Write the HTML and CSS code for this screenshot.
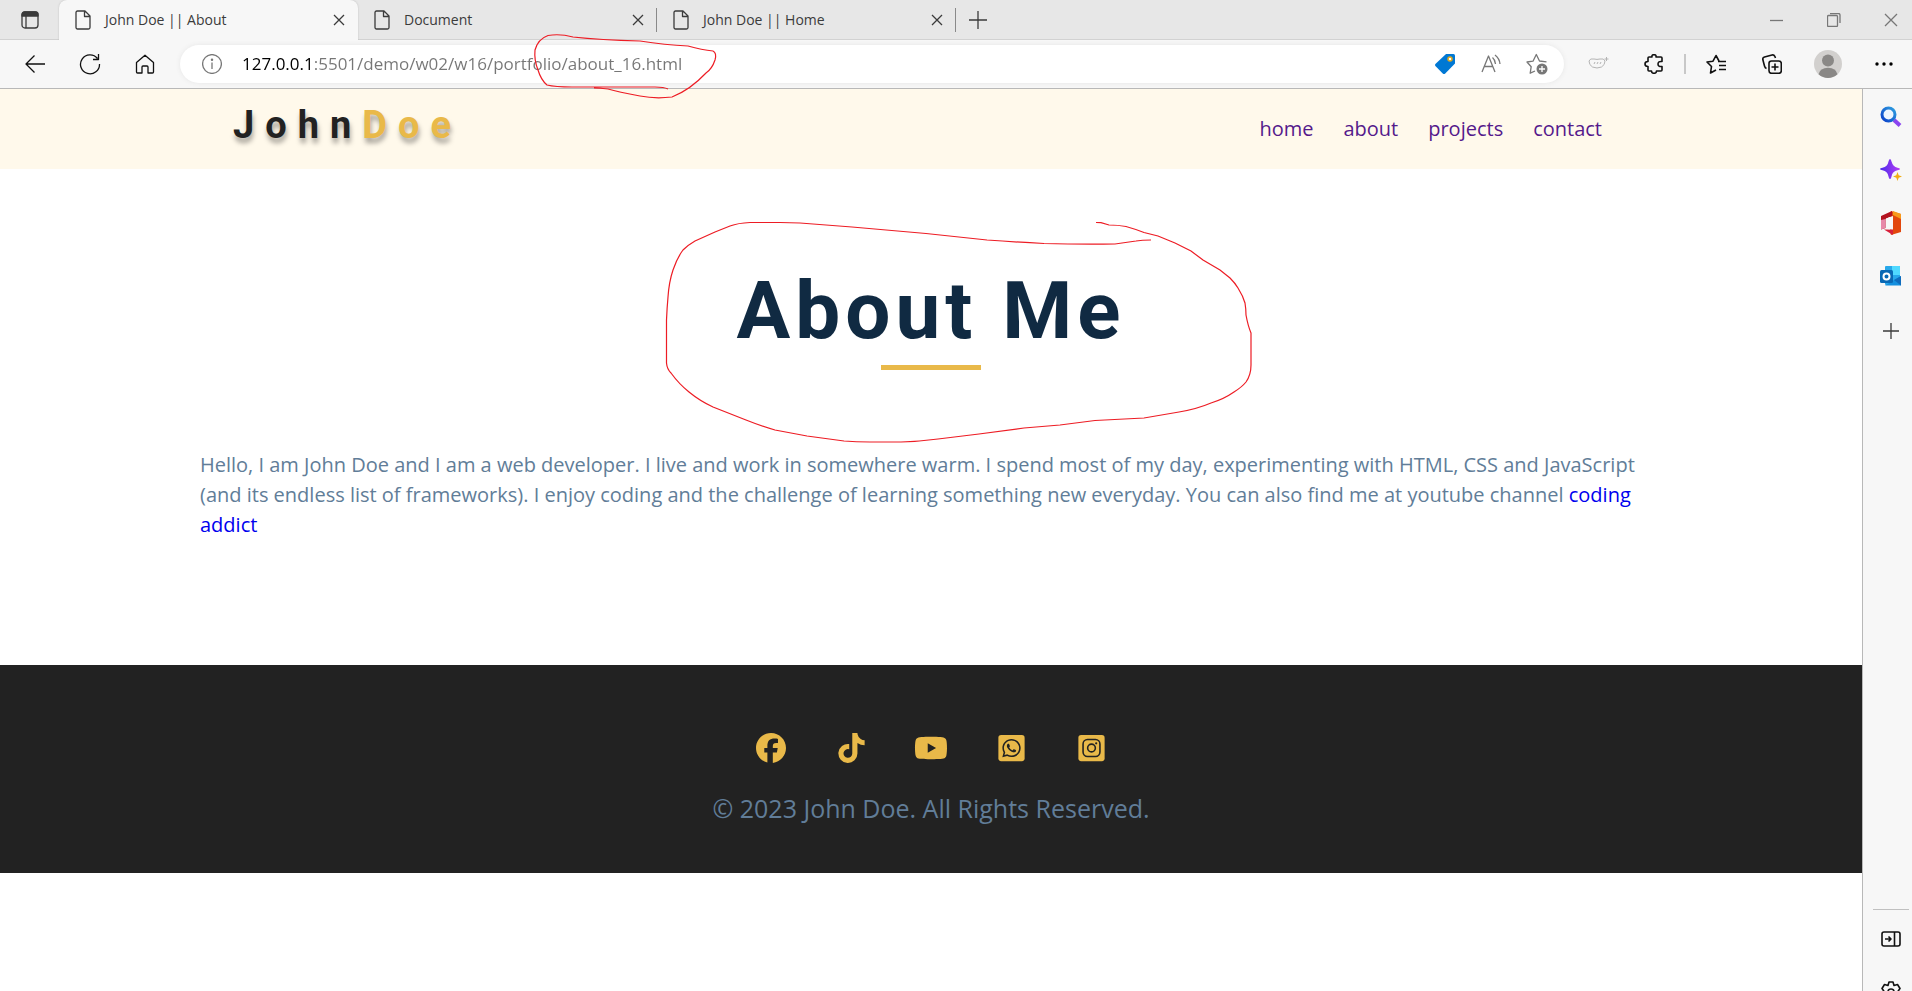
FILE: index.html
```html
<!DOCTYPE html>
<html lang="en">
<head>
<meta charset="utf-8">
<title>John Doe || About</title>
<link rel="stylesheet" href="styles.css">
</head>
<body>
<svg class="defs" aria-hidden="true">
  <symbol id="doc" viewBox="0 0 16 20"><path d="M3 1h7l5 5v11.500a1.500 1.500 0 0 1-1.500 1.500h-11a1.500 1.500 0 0 1-1.500-1.500v-15a1.500 1.500 0 0 1 1.500-1.500zM9.500 1v5.500h5.500"/></symbol>
  <symbol id="cross" viewBox="0 0 12 12"><path d="M1 1l10 10M11 1L1 11"/></symbol>
</svg>
<header class="browser">
  <div class="tabstrip">
    <button class="tab-actions" aria-label="Tab actions"><svg width="18" height="18" viewBox="0 0 18 18" class="line dark"><rect x="1" y="1" width="16" height="16" rx="3"/><path d="M5 5v12"/><path d="M1 5V3.500Q1 1 3.500 1h11Q17 1 17 3.500V5z" fill="#3b3b3b"/></svg></button>
    <div class="tab active"><svg class="line dark" width="16" height="20"><use href="#doc"/></svg><span class="tab-title">John Doe || About</span><button class="close" aria-label="Close tab"><svg class="line dark" width="12" height="12"><use href="#cross"/></svg></button></div>
    <div class="tab"><svg class="line dark" width="16" height="20"><use href="#doc"/></svg><span class="tab-title">Document</span><button class="close" aria-label="Close tab"><svg class="line dark" width="12" height="12"><use href="#cross"/></svg></button></div>
    <div class="tab"><svg class="line dark" width="16" height="20"><use href="#doc"/></svg><span class="tab-title">John Doe || Home</span><button class="close" aria-label="Close tab"><svg class="line dark" width="12" height="12"><use href="#cross"/></svg></button></div>
    <button class="new-tab" aria-label="New tab"><svg class="line dark" width="18" height="18" viewBox="0 0 18 18"><path d="M9 0v18M0 9h18"/></svg></button>
    <div class="window-buttons">
      <button aria-label="Minimize"><svg class="line grey" width="14" height="14" viewBox="0 0 14 14"><path d="M0 7.500h13"/></svg></button>
      <button aria-label="Restore"><svg class="line grey" width="14" height="14" viewBox="0 0 14 14"><rect x=".5" y="2.500" width="10" height="11" rx="1"/><path d="M3 .5h8.500a1.500 1.500 0 0 1 1.500 1.500v8"/></svg></button>
      <button aria-label="Close"><svg class="line grey" width="14" height="14" viewBox="0 0 14 14"><path d="M1 1l12 12M13 1L1 13"/></svg></button>
    </div>
  </div>
  <div class="toolbar">
    <div class="nav-buttons">
      <button aria-label="Back"><svg class="line black" width="22" height="20" viewBox="0 0 22 20"><path d="M21 10H2M10.500 1.500L2 10l8.500 8.500"/></svg></button>
      <button aria-label="Refresh"><svg class="line black" width="22" height="22" viewBox="0 0 22 22"><path d="M20.500 11A9.500 9.500 0 1 1 18.500 5.500M19.500 1v5.500h-5.500"/></svg></button>
      <button aria-label="Home"><svg class="line black" width="20" height="20" viewBox="0 0 20 20"><path d="M1.500 8.500L10 1.200l8.500 7.300V18q0 1-1 1H13v-6q0-1-1-1H8q-1 0-1 1v6H2.500q-1 0-1-1z"/></svg></button>
    </div>
    <div class="address">
      <button class="info" aria-label="Site information"><svg class="line grey" width="20" height="20" viewBox="0 0 20 20"><circle cx="10" cy="10" r="9.400"/><path d="M10 8.500V15"/><circle cx="10" cy="5.800" r=".6"/></svg></button>
      <input class="url" type="text" aria-label="Address" value="127.0.0.1:5501/demo/w02/w16/portfolio/about_16.html">
      <button class="address-action" aria-label="Shopping"><svg width="20" height="20" viewBox="0 0 20 20"><path d="M11 0h7.500Q20 0 20 1.500V9.500L10 19.700q-1 .6-2 0L.4 12q-.7-1 0-2z" fill="#0078d4"/><circle cx="15" cy="5" r="2" fill="#fff" stroke="#e2a91c" stroke-width="1.500"/></svg></button>
      <button class="address-action" aria-label="Read aloud"><svg class="line grey" width="20" height="20" viewBox="0 0 20 20"><path d="M1 18L7.500 2 14 18M3.200 12.500h8.600M11.500 3.500q2.500 2 3 6.500M14 1q4.500 3.500 5 9"/></svg></button>
      <button class="address-action" aria-label="Add favorite"><svg class="line grey" width="22" height="22" viewBox="0 0 22 22"><path d="M9 18l-4.800 2.200 1-6.500L1 9l6-.8L10.300 1.500 13.500 8l7 .8"/><circle cx="16" cy="16" r="5.500" fill="#777" stroke="none"/><path d="M16 13v6M13 16h6" stroke="#fff"/></svg></button>
    </div>
    <div class="extensions">
      <button aria-label="Extension"><svg class="line pale" width="20" height="14" viewBox="0 0 20 14"><path d="M1 4q1-3 5-2 3 .8 6 0 4-1 5 2 0 4-3.500 6-4.500 2-9 0Q1 8 1 4zM6 7l1-2M9 7l1-2M12 7l1-2M18.500 0v4M16.500 2h4"/></svg></button>
      <button aria-label="Extensions"><svg class="line black thick" width="20" height="20" viewBox="0 0 20 20"><path d="M5 3h3q-.5-2.300 2-2.300T12 3h5q1 0 1 1v3.500q-4-.5-4 2.500t4 2.500V16q0 1-1 1h-4.500q0 2.300-2.500 2.300T7.500 17H5q-1 0-1-1v-3.500Q1 12.500 1 10t3-2.500V4q0-1 1-1z"/></svg></button>
      <span class="divider"></span>
      <button aria-label="Favorites"><svg class="line black thick" width="20" height="20" viewBox="0 0 20 20"><path d="M10 16l-5.500 3 1-6.500L1 8l6-.8L10 1.500l3 5.500M12 7.500h8M13 11.500h7M13 15.500h7"/></svg></button>
      <button aria-label="Collections"><svg class="line black thick" width="20" height="20" viewBox="0 0 20 20"><rect x="7" y="7" width="12.300" height="12.300" rx="2.500"/><path d="M13 9.500v7M9.500 13h7M4.500 14.500Q3 14 2.500 12L.8 5.500Q.5 3.500 2.500 3L10 1q2-.4 2.800 1.300L13.500 4"/></svg></button>
      <button aria-label="Profile"><svg width="28" height="28" viewBox="0 0 28 28"><circle cx="14" cy="14" r="14" fill="#d2d0ce"/><circle cx="14" cy="10.500" r="6" fill="#8a8886"/><path d="M4.500 24.200q1.500-6.500 9.500-6.500t9.500 6.500Q19 28 14 28t-9.500-3.800z" fill="#8a8886"/></svg></button>
      <button aria-label="Settings and more"><svg width="18" height="4" viewBox="0 0 18 4"><circle cx="2" cy="2" r="1.700"/><circle cx="9" cy="2" r="1.700"/><circle cx="16" cy="2" r="1.700"/></svg></button>
    </div>
    <svg class="mark url-mark" width="182" height="66" viewBox="535 33 182 66" aria-hidden="true"><path d="M668 89Q664 87 655 87H572Q555 87 547 85Q541 80 538 70Q534 60 535 50Q538 39 548 35.500Q560 33.500 573 37Q600 40 640 41Q665 45 688 46Q702 50 713 51Q717 53 715 60Q712 69 706 73Q690 90 672 97Q655 99 640 96Q618 92 608 89Q600 88 594 88"/></svg>
  </div>
</header>
<div class="workspace">
  <div class="page">
    <header class="site-header">
      <div class="site-header-inner">
        <a class="logo" href="#">John<span>Doe</span></a>
        <nav class="site-nav"><a href="#">home</a><a href="#">about</a><a href="#">projects</a><a href="#">contact</a></nav>
      </div>
    </header>
    <main class="about">
      <div class="title">
        <h1>About Me</h1>
        <div class="underline"></div>
        <svg class="mark title-mark" width="588" height="222" viewBox="665 221 588 222" aria-hidden="true"><path d="M1096 222.500L1101 222.700 1109 225Q1118 225 1126 226.500 1135 229 1144 232.500L1158 236 1175 243 1191 251 1203 260 1220 270 1230 278Q1235 283 1238 288 1243 296 1245 303 1246 309 1246 315 1248 326 1251 333V365Q1251 375 1246 382 1242 387 1234 392 1224 399 1211 403 1197 409 1179 412L1144 418 1095 420.500 1060 425 1024 428 979 434 938 439Q919 441.500 901 442H870Q856 442 844 441L807 436 775 430Q761 426 746 420L713 407Q700 401 689 392 679 384 671 373 667 369 666.500 363V320Q667 308 668 297 669 282 673 270 677 258 683 250 688 245 695 241L715 232 730 226Q738 223 750 222.500H780Q790 222.500 800 223L852 227 926 233.500 987 240Q1015 242 1044 243.500 1080 244.500 1115 244L1136 241Q1142 240 1151 240"/></svg>
      </div>
      <p class="about-text">Hello, I am John Doe and I am a web developer. I live and work in somewhere warm. I spend most of my day, experimenting with HTML, CSS and JavaScript (and its endless list of frameworks). I enjoy coding and the challenge of learning something new everyday. You can also find me at youtube channel <a href="#">coding addict</a></p>
    </main>
    <footer class="site-footer">
      <ul class="social">
        <li><a href="#" aria-label="Facebook"><svg width="30" height="30" viewBox="0 0 512 512"><path d="M512 256C512 114.600 397.400 0 256 0S0 114.600 0 256C0 376 82.700 476.800 194.200 504.500V334.200H141.400V256h52.800V222.300c0-87.100 39.400-127.500 125-127.500c16.200 0 44.200 3.200 55.700 6.400V172c-6-.6-16.500-1-29.600-1c-42 0-58.200 15.900-58.200 57.200V256h83.600l-14.400 78.200H287V510.100C413.800 494.800 512 386.900 512 256z"/></svg></a></li>
        <li><a href="#" aria-label="TikTok"><svg width="27" height="30" viewBox="0 0 448 512"><path d="M448 209.910a210.060 210.060 0 0 1-122.770-39.250V349.380A162.550 162.550 0 1 1 185 188.310V278.200a74.620 74.620 0 1 0 52.230 71.180V0l88 0a121.180 121.180 0 0 0 1.860 22.170A122.180 122.180 0 0 0 381 102.390a121.430 121.430 0 0 0 67 20.140Z"/></svg></a></li>
        <li><a href="#" aria-label="YouTube"><svg width="34" height="30" viewBox="0 0 576 512"><path d="M549.655 124.083c-6.281-23.650-24.787-42.276-48.284-48.597C458.781 64 288 64 288 64S117.220 64 74.629 75.486c-23.497 6.322-42.003 24.947-48.284 48.597-11.412 42.867-11.412 132.305-11.412 132.305s0 89.438 11.412 132.305c6.281 23.650 24.787 41.500 48.284 47.821C117.220 448 288 448 288 448s170.780 0 213.371-11.486c23.497-6.321 42.003-24.171 48.284-47.821 11.412-42.867 11.412-132.305 11.412-132.305s0-89.438-11.412-132.305zm-317.510 213.508V175.185l142.739 81.205-142.739 81.201z"/></svg></a></li>
        <li><a href="#" aria-label="WhatsApp"><svg width="27" height="30" viewBox="0 0 448 512"><rect y="32" width="448" height="448" rx="48"/><path class="cut" transform="translate(67 78) scale(.7)" d="M380.900 97.100C339 55.100 283.200 32 223.900 32c-122.400 0-222 99.600-222 222 0 39.100 10.200 77.300 29.600 111L0 480l117.700-30.900c32.400 17.700 68.900 27 106.100 27h.1c122.300 0 224.100-99.600 224.100-222 0-59.300-25.200-115-67.100-157zm-157 341.600c-33.200 0-65.700-8.900-94-25.700l-6.700-4-69.800 18.300L72 359.200l-4.400-7c-18.500-29.400-28.200-63.300-28.200-98.200 0-101.700 82.800-184.500 184.600-184.500 49.300 0 95.600 19.200 130.400 54.100 34.800 34.900 56.200 81.200 56.100 130.500 0 101.800-84.900 184.600-186.600 184.600zm101.200-138.200c-5.500-2.800-32.800-16.200-37.900-18-5.100-1.900-8.800-2.800-12.500 2.800-3.700 5.600-14.300 18-17.600 21.800-3.200 3.700-6.500 4.200-12 1.400-32.600-16.300-54-29.100-75.500-66-5.700-9.800 5.700-9.100 16.300-30.300 1.800-3.700.9-6.900-.5-9.700-1.400-2.800-12.500-30.100-17.100-41.200-4.500-10.800-9.100-9.300-12.500-9.500-3.200-.2-6.900-.2-10.600-.2-3.700 0-9.700 1.400-14.800 6.900-5.100 5.600-19.400 19-19.400 46.300 0 27.300 19.900 53.700 22.600 57.400 2.800 3.700 39.100 59.700 94.800 83.800 35.200 15.200 49 16.500 66.600 13.900 10.700-1.600 32.800-13.400 37.400-26.400 4.600-13 4.600-24.100 3.200-26.400-1.300-2.500-5-3.900-10.500-6.600z"/></svg></a></li>
        <li><a href="#" aria-label="Instagram"><svg width="27" height="30" viewBox="0 0 448 512"><rect y="32" width="448" height="448" rx="48"/><rect class="cut-line" x="80" y="112" width="288" height="288" rx="76"/><circle class="cut-line" cx="224" cy="256" r="66"/><circle class="cut" cx="304" cy="177" r="19"/></svg></a></li>
      </ul>
      <p class="copyright">© 2023 John Doe. All Rights Reserved.</p>
    </footer>
  </div>
  <aside class="sidebar">
    <button aria-label="Search"><svg width="22" height="22" viewBox="0 0 22 22"><defs><linearGradient id="lens" x1="0" y1="1" x2="1" y2="0"><stop offset="0" stop-color="#0a3fc9"/><stop offset="1" stop-color="#2f9fe0"/></linearGradient></defs><path d="M14 14l6 5.500" stroke="#8b45f0" stroke-width="4"/><circle cx="8.500" cy="8.500" r="6.500" fill="#eef6ff" stroke="url(#lens)" stroke-width="3"/></svg></button>
    <button aria-label="Discover"><svg width="22" height="22" viewBox="0 0 22 22"><defs><linearGradient id="spark"><stop offset="0" stop-color="#4a2bea"/><stop offset="1" stop-color="#b53df5"/></linearGradient></defs><path d="M10 0q1 0 1.500 2.500Q13 8 17.500 8.700 20 9.300 20 10t-2.500 1.300Q12.500 12 11.500 17.500 11 20 10 20t-1.500-2.500Q7.500 12 2.500 11.300 0 10.700 0 10t2.500-1.300Q7.500 8 8.500 2.500 9 0 10 0z" fill="url(#spark)"/><path d="M17.500 13l1.200 3.300L22 17.500l-3.300 1.200-1.200 3.300-1.200-3.300-3.300-1.200 3.300-1.200z" fill="#f2ad14"/></svg></button>
    <button aria-label="Office"><svg width="22" height="24" viewBox="0 0 22 24"><path d="M11 0l10 3v18l-10 3-1-3V3z" fill="#e2470d"/><path d="M13 0l8 3v5l-8-4z" fill="#f79a1c"/><path d="M12 0v5L5.500 8v9L1 18.500V5z" fill="#b3131f"/><path d="M1 9l4.500-1v9L1 18.500z" fill="#e888a9"/><path d="M4 18.500h9V24z" fill="#d8203b"/><path d="M6 7.500L13 5v13.500L6 18z" fill="#f7f7f7"/></svg></button>
    <button aria-label="Outlook"><svg width="22" height="22" viewBox="0 0 22 22"><rect x="5" y="1" width="15" height="19" rx="1" fill="#28a8ea"/><path d="M12 1h7q1 0 1 1v8h-8z" fill="#50d9ff"/><path d="M5 20.500L21 11v9.500z" fill="#1490df"/><path d="M14 15l7-4v9.500z" fill="#0f6cbd"/><rect x="0" y="5" width="13" height="13" rx="1.500" fill="#0a69b5"/><circle cx="6.500" cy="11.500" r="3" fill="none" stroke="#fff" stroke-width="2"/></svg></button>
    <button class="customize" aria-label="Customize"><svg class="line dark" width="16" height="16" viewBox="0 0 16 16"><path d="M8 0v16M0 8h16"/></svg></button>
    <div class="sidebar-bottom">
      <button aria-label="Hide sidebar"><svg class="line black thick" width="20" height="16" viewBox="0 0 20 16"><rect x="1" y="1" width="18" height="14" rx="2"/><path d="M13.500 1v14M4 8h6M7.500 5.500L10 8l-2.500 2.500"/></svg></button>
      <button aria-label="Settings"><svg class="line black thick" width="20" height="22" viewBox="0 0 20 22"><path d="M8 1h4l1 3.500 3.500-1 2.500 4L16.500 11 19 14.500l-2.500 4-3.500-1-1 3.500H8l-1-3.500-3.500 1-2.500-4L3.500 11 1 7.500l2.500-4 3.500 1z"/><circle cx="10" cy="11" r="3"/></svg></button>
    </div>
  </aside>
</div>
</body>
</html>
```
FILE: styles.css
```css
* { box-sizing: border-box; }
body {
  margin: 0;
  height: 100vh;
  display: flex;
  flex-direction: column;
  overflow: hidden;
  background: #fff;
  font-family: "Open Sans", sans-serif;
}
button {
  display: flex;
  align-items: center;
  justify-content: center;
  padding: 0;
  border: 0;
  background: none;
}
svg { flex: none; }
.defs { position: absolute; width: 0; height: 0; }
.line { fill: none; stroke-width: 1.3; stroke-linejoin: round; }
.thick { stroke-width: 1.6; }
.dark { stroke: #3b3b3b; }
.black { stroke: #111; }
.grey { stroke: #777; }
.pale { stroke: #b4b4b4; stroke-width: 1; overflow: visible; }
.mark {
  position: absolute;
  overflow: visible;
  fill: none;
  stroke: #ed1c24;
  stroke-width: 1.2;
  pointer-events: none;
}

.browser { flex: none; background: #f7f7f7; border-bottom: 1px solid #b8b8b8; }
.tabstrip {
  display: flex;
  height: 40px;
  background: #e7e7e7;
  border-bottom: 1px solid #d2d2d2;
}
.tab-actions { width: 59px; }
.tab {
  width: 299px;
  height: 40px;
  display: flex;
  align-items: center;
  gap: 14px;
  padding: 0 12px 0 16px;
  position: relative;
  color: #3b3b3b;
  font-size: 14px;
}
.tab:not(.active)::after {
  content: "";
  position: absolute;
  right: 0;
  top: 8px;
  height: 24px;
  border-right: 1px solid #8a8a8a;
}
.tab.active {
  background: #f7f7f7;
  border-radius: 8px 8px 0 0;
  box-shadow: 0 0 2px #bbb;
  clip-path: inset(-2px -2px 0 -2px);
}
.tab-title { flex: 1; padding-bottom: 2px; }
.close { width: 14px; height: 24px; }
.new-tab { width: 44px; }
.window-buttons { display: flex; margin-left: auto; }
.window-buttons button { width: 57px; }
.window-buttons button:last-child { width: 50px; padding-left: 7px; }

.toolbar { position: relative; display: flex; align-items: center; height: 48px; }
.nav-buttons { display: flex; padding: 0 8px 0 7px; }
.nav-buttons button { width: 55px; height: 40px; }
.address {
  flex: 1;
  display: flex;
  align-items: center;
  height: 38px;
  padding-right: 4px;
  border-radius: 19px;
  background: #fff;
  box-shadow: 0 0 5px #e6e6e6;
}
.info { width: 62px; height: 36px; padding-left: 2px; }
.url {
  flex: 1;
  height: 36px;
  padding: 0 0 2px;
  border: 0;
  outline: 0;
  font: 17px "Open Sans", sans-serif;
  color: transparent;
  background: linear-gradient(90deg, #000 71px, #767676 71px);
  -webkit-background-clip: text;
  background-clip: text;
}
.address-action { width: 46px; height: 36px; }
.extensions { display: flex; align-items: center; margin-left: 6px; }
.extensions button { width: 56px; height: 40px; }
.divider { width: 6px; height: 20px; background: linear-gradient(#c8c8c8, #c8c8c8) center / 2px 100% no-repeat; }
.url-mark { left: 535px; top: -7px; z-index: 2; }

.workspace { flex: 1; min-height: 0; display: flex; }
.page { flex: 1; overflow: hidden; border-right: 1px solid #b8b8b8; }
.site-header { background: #fff9eb; }
.site-header-inner {
  display: flex;
  align-items: center;
  justify-content: space-between;
  height: 80px;
  max-width: 1400px;
  margin: 0 auto;
  padding: 0 14px 0 2px;
}
.logo {
  margin-bottom: 8px;
  color: #222;
  font: bold 38px/50px Roboto, sans-serif;
  letter-spacing: 11px;
  text-decoration: none;
  text-shadow: 1px 5px 5px rgba(0, 0, 0, .35);
}
.logo span { color: #e9b949; }
.site-nav { display: flex; }
.site-nav a {
  padding: 0 15px;
  color: #551a8b;
  font-size: 20px;
  line-height: 30px;
  text-decoration: none;
}
.about { padding: 82px 200px 0; }
.title { position: relative; text-align: center; }
h1 {
  margin: 0;
  color: #102a42;
  font: bold 80px/120px Roboto, sans-serif;
  letter-spacing: 5px;
}
.underline { width: 100px; height: 5px; margin: -6px auto 80px; background: #e9b949; }
.title-mark { left: 50%; top: -30px; margin-left: -266px; }
.about-text {
  margin: 0 0 125px;
  color: #617d98;
  font-size: 20px;
  line-height: 30px;
}
.about-text a { color: #00e; text-decoration: none; }
.site-footer {
  display: flex;
  flex-direction: column;
  align-items: center;
  padding: 68px 0 45px;
  background: #222;
}
.social { display: flex; margin: 0; padding: 0; list-style: none; }
.social li { width: 80px; }
.social a { display: flex; justify-content: center; fill: #e9b949; }
.cut { fill: #222; }
.cut-line { fill: none; stroke: #222; stroke-width: 27; }
.copyright { margin: 25px 0 0; color: #617d98; font-size: 25px; line-height: 40px; }

.sidebar {
  width: 49px;
  display: flex;
  flex-direction: column;
  align-items: center;
  overflow: hidden;
  padding: 1px 0 0 7px;
  background: #f7f7f7;
}
.sidebar button { flex: none; width: 36px; height: 53px; }
.sidebar .customize { height: 58px; }
.sidebar-bottom {
  margin-top: auto;
  margin-bottom: -27px;
  padding-top: 2px;
  border-top: 1px solid #c0c0c0;
}
```
